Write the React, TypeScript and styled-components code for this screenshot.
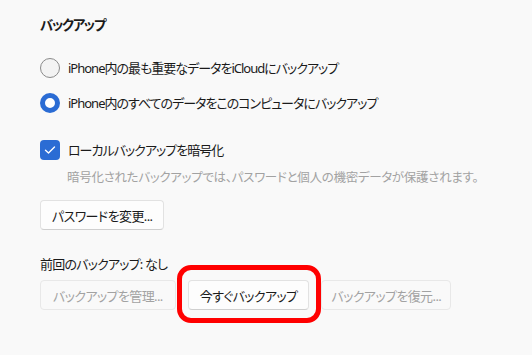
import React from "react";
import styled, { createGlobalStyle } from "styled-components";

const GlobalStyle = createGlobalStyle`
  html, body {
    margin: 0;
    background: #f9f9f9;
  }
  body {
    font-family: "Noto Sans", "Noto Sans CJK JP", sans-serif;
    font-feature-settings: "palt";
    color: #1b1b1b;
  }
`;

const Panel = styled.main`
  box-sizing: border-box;
  min-height: 100vh;
  padding: 14px 0 40px 40px;
  display: flex;
  flex-direction: column;
  align-items: flex-start;
`;

const Heading = styled.h2`
  margin: 0;
  font-size: 13.5px;
  font-weight: 600;
  line-height: 22px;
  letter-spacing: -1.4px;
`;

const OptionRow = styled.label<{ $top: number }>`
  display: flex;
  align-items: center;
  gap: 8px;
  margin-top: ${(p) => p.$top}px;
  font-size: 13px;
  letter-spacing: -1px;
  line-height: 20px;
`;

const Radio = styled.span<{ $checked?: boolean }>`
  box-sizing: border-box;
  width: 20px;
  height: 20px;
  border-radius: 50%;
  flex-shrink: 0;
  background: ${(p) => (p.$checked ? "#fff" : "#f3f3f3")};
  border: ${(p) => (p.$checked ? "5.5px solid #2b6cd4" : "1px solid #8a8a8a")};
`;

const Check = styled.span`
  width: 20px;
  height: 20px;
  border-radius: 4px;
  background: #2b6cd4;
  display: flex;
  align-items: center;
  justify-content: center;
  flex-shrink: 0;
`;

const Note = styled.p`
  margin: 9px 0 0 27px;
  font-size: 12.5px;
  letter-spacing: -0.3px;
  line-height: 18px;
  color: #a2a2a2;
`;

const Button = styled.button<{ $disabled?: boolean; $pad?: number }>`
  box-sizing: border-box;
  height: 30px;
  padding: 0 ${(p) => p.$pad ?? 11}px;
  border-radius: 4px;
  font-family: inherit;
  font-feature-settings: "palt";
  font-size: 13px;
  letter-spacing: -0.6px;
  background: ${(p) => (p.$disabled ? "#f9f9f9" : "#fdfdfd")};
  color: ${(p) => (p.$disabled ? "#a2a2a2" : "#1b1b1b")};
  border: 1px solid ${(p) => (p.$disabled ? "#e8e8e8" : "#e2e2e2")};
  border-bottom-color: ${(p) => (p.$disabled ? "#e8e8e8" : "#cfcfcf")};
  cursor: default;
`;

const PasswordButton = styled(Button)`
  margin-top: 13px;
`;

const Status = styled.div`
  margin-top: 24px;
  font-size: 13px;
  letter-spacing: -0.8px;
  line-height: 20px;
`;

const ButtonRow = styled.div`
  display: flex;
  gap: 12px;
  margin-top: 6px;
`;

const Highlight = styled.span`
  position: relative;
  display: flex;
  &::after {
    content: "";
    position: absolute;
    left: -11px;
    top: -15px;
    right: -12px;
    bottom: -13px;
    border: 5px solid #ff0000;
    border-radius: 14px;
    pointer-events: none;
  }
`;

const App: React.FC = () => {
  return (
    <>
      <GlobalStyle />
      <Panel>
        <Heading>バックアップ</Heading>
        <OptionRow $top={22}>
          <Radio />
          iPhone内の最も重要なデータをiCloudにバックアップ
        </OptionRow>
        <OptionRow $top={15}>
          <Radio $checked />
          iPhone内のすべてのデータをこのコンピュータにバックアップ
        </OptionRow>
        <OptionRow $top={27}>
          <Check>
            <svg width="12" height="10" viewBox="0 0 12 10">
              <path d="M1.5 5.2 L4.5 8 L10.5 2" fill="none" stroke="#fff" strokeWidth="1.4" strokeLinecap="round" strokeLinejoin="round" />
            </svg>
          </Check>
          ローカルバックアップを暗号化
        </OptionRow>
        <Note>暗号化されたバックアップでは、パスワードと個人の機密データが保護されます。</Note>
        <PasswordButton>パスワードを変更...</PasswordButton>
        <Status>前回のバックアップ: なし</Status>
        <ButtonRow>
          <Button $disabled $pad={12}>バックアップを管理...</Button>
          <Highlight>
            <Button>今すぐバックアップ</Button>
          </Highlight>
          <Button $disabled $pad={9}>バックアップを復元...</Button>
        </ButtonRow>
      </Panel>
    </>
  );
};

export default App;
